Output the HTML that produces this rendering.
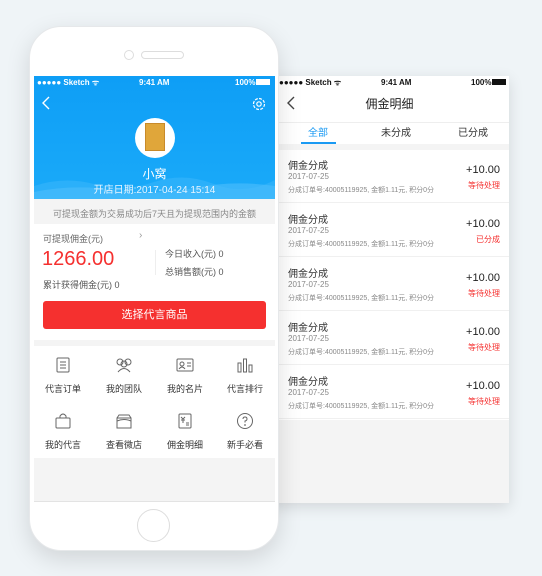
<!DOCTYPE html>
<html><head><meta charset="utf-8"><style>
*{margin:0;padding:0;box-sizing:border-box}
body{width:542px;height:576px;background:#eff4f7;position:relative;overflow:hidden;font-family:"Liberation Sans","Noto Sans CJK SC",sans-serif}
.abs{position:absolute}
.panel{left:270px;top:76px;width:239px;height:427px;background:#f4f4f4;box-shadow:0 4px 14px rgba(0,0,0,.12);overflow:hidden}
.phone{left:29px;top:26px;width:250px;height:525px;background:#fff;border-radius:32px;box-shadow:0 8px 24px rgba(0,0,0,.13);border:1px solid #e6e8ea}
.screen{left:34px;top:76px;width:241px;height:426px;background:#f4f4f4;overflow:hidden;border-bottom:1px solid #e3e3e3}
.sb{font-size:8px;font-weight:bold;height:12px;line-height:12px}
.t{position:absolute;white-space:nowrap}
.item{position:absolute;left:9px;width:230px;height:52px;background:#fff}
</style></head><body>
<div class="abs panel">
  <div class="abs" style="left:0;top:0;width:239px;height:68px;background:#fff"></div>
  <div class="t sb" style="left:9px;top:1px;color:#111">●●●●● Sketch ᯤ</div>
  <div class="t sb" style="left:111px;top:1px;color:#111">9:41 AM</div>
  <div class="t sb" style="left:201px;top:1px;color:#111">100%<span style="display:inline-block;width:14px;height:6px;background:#111;margin-left:1px"></span></div>
  <svg class="abs" style="left:16px;top:20px" width="10" height="14"><path d="M8 1L2 7l6 6" stroke="#444" stroke-width="1.4" fill="none"/></svg>
  <div class="t" style="left:0;width:239px;text-align:center;top:19px;font-size:12px;color:#222">佣金明细</div>
  <div class="abs" style="left:0;top:46px;width:239px;height:1px;background:#eee"></div>
  <div class="t" style="left:38px;top:48px;font-size:10px;color:#1a9af3">全部</div>
  <div class="t" style="left:111px;top:48px;font-size:10px;color:#333">未分成</div>
  <div class="t" style="left:188px;top:48px;font-size:10px;color:#333">已分成</div>
  <div class="abs" style="left:31px;top:66px;width:35px;height:2px;background:#1a9af3"></div>
  <div class="abs" style="left:0;top:74px;width:239px;height:270px;background:#fff"></div>
</div>
<div id="items"></div>
<div class="abs phone">
  <div class="abs" style="left:94px;top:23px;width:10px;height:10px;border:1px solid #ddd;border-radius:50%"></div>
  <div class="abs" style="left:111px;top:24px;width:43px;height:8px;border:1px solid #ddd;border-radius:5px"></div>
  <div class="abs" style="left:107px;top:482px;width:33px;height:33px;border:1px solid #ddd;border-radius:50%"></div>
</div>
<div class="abs screen">
  <div class="abs" style="left:0;top:0;width:241px;height:123px;background:linear-gradient(180deg,#0e9ef6,#1aaaf9)"></div>
  <svg class="abs" style="left:0;top:98px" width="241" height="25"><path d="M0 12Q30 2 60 10T120 8T180 10T241 6V25H0Z" fill="#3db7fb" opacity=".5"/><path d="M0 18Q40 10 80 16T160 14T241 12V25H0Z" fill="#4cbefb" opacity=".6"/></svg>
  <div class="t sb" style="left:3px;top:1px;color:#fff">●●●●● Sketch ᯤ</div>
  <div class="t sb" style="left:105px;top:1px;color:#fff">9:41 AM</div>
  <div class="t sb" style="left:201px;top:1px;color:#fff">100%<span style="display:inline-block;width:14px;height:6px;background:#fff;margin-left:1px"></span></div>
  <svg class="abs" style="left:7px;top:20px" width="10" height="14"><path d="M8 1L2 7l6 6" stroke="#fff" stroke-width="1.4" fill="none"/></svg>
  <svg class="abs" style="left:217px;top:20px" width="16" height="16"><circle cx="8" cy="8" r="5.5" stroke="#fff" stroke-width="1.2" fill="none" stroke-dasharray="3 1.3"/><circle cx="8" cy="8" r="2.2" stroke="#fff" stroke-width="1.2" fill="none"/></svg>
  <div class="abs" style="left:101px;top:42px;width:40px;height:40px;border-radius:50%;background:#fff"></div>
  <div class="abs" style="left:111px;top:47px;width:20px;height:28px;background:#e0a63a;border:1px solid #c88a2a"></div>
  <div class="t" style="left:0;width:241px;text-align:center;top:89px;font-size:12px;color:#fff">小窝</div>
  <div class="t" style="left:0;width:241px;text-align:center;top:105px;font-size:10px;color:#e8f5ff">开店日期:2017-04-24 15:14</div>
  <div class="t" style="left:0;width:241px;text-align:center;top:131px;font-size:9px;color:#888">可提现金额为交易成功后7天且为提现范围内的金额</div>
  <div class="abs" style="left:0;top:148px;width:241px;height:116px;background:#fff"></div>
  <div class="t" style="left:9px;top:156px;font-size:9px;color:#666">可提现佣金(元)</div>
  <div class="t" style="left:105px;top:154px;font-size:10px;color:#999">›</div>
  <div class="t" style="left:8px;top:172px;font-size:20px;color:#f5302f">1266.00</div>
  <div class="abs" style="left:121px;top:174px;width:1px;height:25px;background:#eee"></div>
  <div class="t" style="left:131px;top:171px;font-size:9px;color:#555">今日收入(元) 0</div>
  <div class="t" style="left:131px;top:189px;font-size:9px;color:#555">总销售额(元) 0</div>
  <div class="t" style="left:9px;top:202px;font-size:9px;color:#555">累计获得佣金(元) 0</div>
  <div class="abs" style="left:9px;top:225px;width:223px;height:28px;background:#f5302f;border-radius:3px;color:#fff;font-size:11px;text-align:center;line-height:28px">选择代言商品</div>
  <div class="abs" style="left:0;top:270px;width:241px;height:112px;background:#fff"></div>
  <div id="grid"></div>
</div>
<script>
var g='',L=['代言订单','我的团队','我的名片','代言排行','我的代言','查看微店','佣金明细','新手必看'],cx=[29,90,151,211];
var ic=['<rect x="3" y="2" width="12" height="14" rx="1"/><path d="M6 6h6M6 9h6M6 12h6"/>','<circle cx="5" cy="6" r="3"/><circle cx="13" cy="6" r="3"/><circle cx="9" cy="8" r="3"/><path d="M3 16q6-7 12 0"/>','<rect x="1" y="3" width="16" height="12" rx="1"/><circle cx="6" cy="8" r="2"/><path d="M3 13q3-4 6 0M11 7h4M11 10h4"/>','<rect x="2" y="7" width="3" height="9"/><rect x="7.5" y="3" width="3" height="13"/><rect x="13" y="9" width="3" height="7"/>','<rect x="2" y="6" width="14" height="10" rx="1"/><path d="M6 6V4q3-4 6 0v2"/>','<path d="M2 6h14v10H2zM2 6l2-3h10l2 3"/><path d="M2 9q7 -3 14 0"/>','<rect x="3" y="2" width="12" height="14" rx="1"/><path d="M5 5l2 2 2-2M7 7v4M5 8h4M10 11h3M10 13h3"/>','<circle cx="9" cy="9" r="7.5"/><path d="M7 7q0-2 2-2t2 2q0 1.5-2 2v1.5"/><circle cx="9" cy="13" r=".4"/>'];
for(var i=0;i<8;i++){var r=i>>2,c=i%4,y=280+r*56;
g+='<svg class="abs" style="left:'+(cx[c]-9)+'px;top:'+y+'px" width="18" height="18" fill="none" stroke="#666" stroke-width="1">'+ic[i]+'</svg>';
g+='<div class="t" style="left:'+(cx[c]-30)+'px;width:60px;text-align:center;top:'+(y+26)+'px;font-size:9px;color:#333">'+L[i]+'</div>';}
document.getElementById('grid').innerHTML=g;
var s='';for(var k=0;k<5;k++){var y=150+k*54,st=k==1?'已分成':'等待处理';
s+='<div class="abs" style="left:279px;top:'+y+'px;width:230px;height:53px;background:#fff;border-bottom:1px solid #f0f0f0"></div>';
s+='<div class="t" style="left:288px;top:'+(y+7)+'px;font-size:10px;color:#333">佣金分成</div>';
s+='<div class="t" style="left:288px;top:'+(y+22)+'px;font-size:8px;color:#888">2017-07-25</div>';
s+='<div class="t" style="left:288px;top:'+(y+35)+'px;font-size:7px;color:#888">分成订单号:40005119925, 金额1.11元, 积分0分</div>';
s+='<div class="t" style="left:450px;width:50px;text-align:right;top:'+(y+14)+'px;font-size:11px;color:#222">+10.00</div>';
s+='<div class="t" style="left:450px;width:50px;text-align:right;top:'+(y+30)+'px;font-size:8px;color:#f5302f">'+st+'</div>';}
document.getElementById('items').innerHTML=s;
</script>
</body></html>
